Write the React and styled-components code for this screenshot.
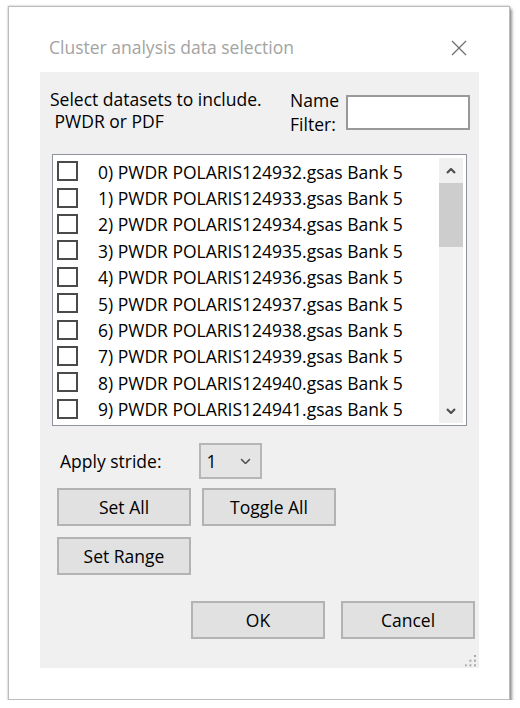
import React from "react";
import styled, { createGlobalStyle } from "styled-components";

const Global = createGlobalStyle`
  html, body { margin: 0; padding: 0; background: #ffffff; }
  body { font-family: "Open Sans", "Noto Sans", sans-serif; font-size: 17.5px; color: #000; }
  * { box-sizing: border-box; }
`;

const Page = styled.div`
  padding: 6px 0 0 8px;
`;

const Window = styled.div`
  width: 502px;
  height: 694px;
  background: #ffffff;
  border: 1px solid #bdbdbd;
  box-shadow: 0 0 2px rgba(0, 0, 0, 0.3), 2px 3px 3px rgba(0, 0, 0, 0.4);
  padding: 0 30px 31px 31px;
  display: flex;
  flex-direction: column;
`;

const TitleBar = styled.div`
  height: 65px;
  padding: 16px 12px 0 9px;
  display: flex;
  align-items: center;
  justify-content: space-between;
`;

const Title = styled.div`
  color: #a3a3a3;
  font-size: 17.5px;
  line-height: 24px;
  margin-top: -1px;
`;

const Close = styled.svg`
  width: 16px;
  height: 16px;
  margin-top: 1px;
`;

const Client = styled.div`
  flex: 1;
  background: #f0f0f0;
  padding-top: 17px;
  display: flex;
  flex-direction: column;
`;

const Header = styled.div`
  height: 65px;
  display: flex;
  justify-content: space-between;
  align-items: flex-start;
  padding: 0 9px 0 10px;
`;

const Intro = styled.div`
  line-height: 22px;
  white-space: pre;
  margin-top: -1px;
`;

const FilterGroup = styled.div`
  display: flex;
  align-items: flex-start;
  gap: 7px;
`;

const FilterLabel = styled.div`
  line-height: 23.5px;
`;

const TextBox = styled.div`
  width: 124px;
  height: 35px;
  margin-top: 6px;
  background: #ffffff;
  border: 2px solid #999999;
`;

const ListBox = styled.div`
  margin: 0 12px;
  height: 272px;
  background: #ffffff;
  border: 1px solid #8f949c;
  display: flex;
`;

const Rows = styled.div`
  flex: 1;
  padding-top: 3px;
  display: flex;
  flex-direction: column;
`;

const Row = styled.div`
  height: 26.4px;
  display: flex;
  align-items: center;
  padding-left: 4px;
  gap: 20px;
`;

const Check = styled.span`
  width: 21px;
  height: 20px;
  border: 2px solid #4a4a4a;
  background: #ffffff;
  flex: none;
`;

const RowText = styled.span`
  line-height: 24px;
  white-space: nowrap;
  margin-top: 1px;
`;

const Scrollbar = styled.div`
  width: 24px;
  margin: 3px 3px 2px 0;
  background: #f0f0f0;
  display: flex;
  flex-direction: column;
`;

const ArrowCell = styled.div`
  height: 25px;
  display: flex;
  align-items: center;
  justify-content: center;
  flex: none;
`;

const Thumb = styled.div`
  height: 64px;
  background: #cdcdcd;
  flex: none;
`;

const Track = styled.div`
  flex: 1;
`;

const StrideRow = styled.div`
  margin-top: 17px;
  height: 36px;
  display: flex;
  align-items: center;
  padding-left: 20px;
  gap: 37px;
`;

const Combo = styled.div`
  width: 63px;
  height: 36px;
  background: #e5e5e5;
  border: 2px solid #b6b6b6;
  display: flex;
  align-items: center;
  justify-content: space-between;
  padding: 0 9px 0 6px;
`;

const ButtonGrid = styled.div`
  margin: 9px 0 0 17px;
  display: grid;
  grid-template-columns: 134px 134px;
  grid-auto-rows: 38px;
  gap: 11px;
`;

const Button = styled.div`
  width: 134px;
  height: 38px;
  background: #e1e1e1;
  border: 2px solid #b3b3b3;
  display: flex;
  align-items: center;
  justify-content: center;
  line-height: 24px;
`;

const Footer = styled.div`
  margin-top: 26px;
  display: flex;
  justify-content: flex-end;
  gap: 16px;
  padding-right: 4px;
`;

const Grip = styled.svg`
  margin-top: auto;
  align-self: flex-end;
  margin-right: 2px;
  margin-bottom: 1px;
  width: 12px;
  height: 12px;
`;

const Chevron = ({ up, size = 10, color = "#505050", w = 2.2 }) => (
  <svg width={size} height={size * 0.6} viewBox="0 0 10 6">
    <polyline
      points={up ? "1,5 5,1 9,5" : "1,1 5,5 9,1"}
      fill="none"
      stroke={color}
      strokeWidth={w}
    />
  </svg>
);

const items = Array.from({ length: 10 }, (_, i) => `${i}) PWDR POLARIS${124932 + i}.gsas Bank 5`);

export default function App() {
  return (
    <Page>
      <Global />
      <Window>
        <TitleBar>
          <Title>Cluster analysis data selection</Title>
          <Close viewBox="0 0 16 16">
            <path d="M1 1 L15 15 M15 1 L1 15" stroke="#707070" strokeWidth="1.3" fill="none" />
          </Close>
        </TitleBar>
        <Client>
          <Header>
            <Intro>{"Select datasets to include.\n PWDR or PDF"}</Intro>
            <FilterGroup>
              <FilterLabel>
                Name
                <br />
                Filter:
              </FilterLabel>
              <TextBox />
            </FilterGroup>
          </Header>
          <ListBox>
            <Rows>
              {items.map((t) => (
                <Row key={t}>
                  <Check />
                  <RowText>{t}</RowText>
                </Row>
              ))}
            </Rows>
            <Scrollbar>
              <ArrowCell>
                <Chevron up />
              </ArrowCell>
              <Thumb />
              <Track />
              <ArrowCell>
                <Chevron />
              </ArrowCell>
            </Scrollbar>
          </ListBox>
          <StrideRow>
            <span>Apply stride:</span>
            <Combo>
              <span>1</span>
              <Chevron size={11} color="#555" w={1.4} />
            </Combo>
          </StrideRow>
          <ButtonGrid>
            <Button>Set All</Button>
            <Button>Toggle All</Button>
            <Button>Set Range</Button>
          </ButtonGrid>
          <Footer>
            <Button>OK</Button>
            <Button>Cancel</Button>
          </Footer>
          <Grip viewBox="0 0 12 12">
            {[
              [10, 1],
              [5.4, 5.7],
              [10, 5.7],
              [0.7, 10.3],
              [5.4, 10.3],
              [10, 10.3],
            ].map(([x, y]) => (
              <rect key={`${x}-${y}`} x={x - 1} y={y - 1} width="2" height="2" fill="#a8a8a8" />
            ))}
          </Grip>
        </Client>
      </Window>
    </Page>
  );
}
